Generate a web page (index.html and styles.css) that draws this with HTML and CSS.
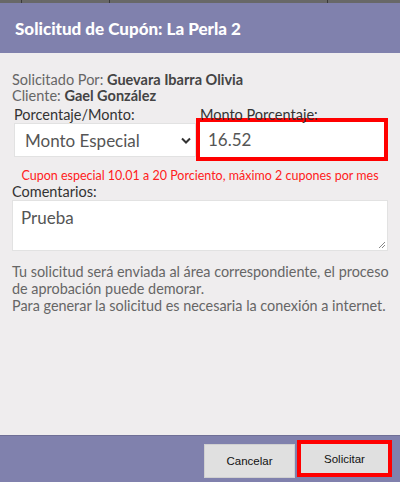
FILE: index.html
```html
<!DOCTYPE html>
<html lang="es">
<head>
  <meta charset="utf-8">
  <title>Solicitud de Cupón</title>
  <link rel="stylesheet" href="styles.css">
</head>
<body>
  <div class="backdrop">
    <span class="col col-1"></span>
    <span class="col col-2"></span>
    <span class="col col-3"></span>
  </div>
  <div class="modal">
    <div class="modal-header">Solicitud de Cupón: La Perla 2</div>

    <div class="modal-body">
      <div class="info">
        <div>Solicitado Por: <b>Guevara Ibarra Olivia</b></div>
        <div>Cliente: <b>Gael González</b></div>
      </div>

      <div class="fields">
        <div class="field field-left">
          <label>Porcentaje/Monto:</label>
          <div class="select">
            <span>Monto Especial</span>
            <svg class="chevron" width="10" height="7" viewBox="0 0 10 7">
              <path d="M1 1.5 L5 5.5 L9 1.5" fill="none" stroke="#333" stroke-width="2"/>
            </svg>
          </div>
        </div>
        <div class="field field-right">
          <label>Monto Porcentaje:</label>
          <div class="input highlight">16.52</div>
        </div>
      </div>

      <div class="warning">Cupon especial 10.01 a 20 Porciento, máximo 2 cupones por mes</div>

      <label class="comments-label">Comentarios:</label>
      <div class="textarea">
        Prueba
        <svg class="grip" width="8" height="8" viewBox="0 0 8 8">
          <path d="M7 1 L1 7 M7 4 L4 7" stroke="#888" stroke-width="1"/>
        </svg>
      </div>

      <p class="note">
        Tu solicitud será enviada al área correspondiente, el proceso de aprobación puede demorar.<br>
        Para generar la solicitud es necesaria la conexión a internet.
      </p>
    </div>

    <div class="modal-footer">
      <button class="btn">Cancelar</button>
      <button class="btn btn-main">Solicitar</button>
    </div>
  </div>
</body>
</html>
```

FILE: styles.css
```css
body {
  margin: 0;
  width: 400px;
  height: 482px;
  font-family: Lato, "Open Sans", sans-serif;
  display: flex;
  flex-direction: column;
  overflow: hidden;
}
.backdrop {
  height: 3px;
  background-color: #686868;
  display: flex;
}
.backdrop .col {
  width: 1px;
  background-color: #3a3a3a;
}
.col-1 { margin-left: 21px; }
.col-2 { margin-left: 87px; }
.col-3 { margin-left: 217px; }
.modal {
  flex: 1;
  display: flex;
  flex-direction: column;
  background-color: #efedee;
}
.modal-header {
  height: 50px;
  box-sizing: border-box;
  padding: 15px 15px 0;
  background-color: #8081ad;
  color: white;
  font-size: 17px;
  font-weight: 900;
}
.modal-body {
  flex: 1;
  padding: 19px 12px 0;
}
.info {
  font-size: 14.5px;
  line-height: 16px;
  color: #666;
}
.info b {
  color: #444;
}
.fields {
  display: flex;
  margin-top: 2px;
}
.field label {
  display: block;
  font-size: 14.5px;
  line-height: 17px;
  color: #333;
}
.field-left {
  width: 182px;
  padding-left: 2px;
}
.field-right {
  width: 192px;
}
.field-right label {
  padding-left: 4px;
  margin-bottom: -5px;
}
.select {
  height: 34px;
  box-sizing: border-box;
  background: white;
  border: 1px solid #e2e2e2;
  display: flex;
  align-items: center;
  justify-content: space-between;
  padding: 0 4px 0 10px;
  font-size: 17px;
  color: #555;
}
.input {
  height: 43px;
  box-sizing: border-box;
  background: white;
  padding: 0 0 0 8px;
  display: flex;
  align-items: center;
  font-size: 17px;
  color: #555;
}
.highlight {
  border: 4px solid #ff0000;
}
.warning {
  margin-top: 6px;
  text-align: center;
  font-size: 12.5px;
  line-height: 17px;
  color: #ff2020;
}
.comments-label {
  display: block;
  font-size: 14.5px;
  line-height: 16px;
  color: #333;
}
.textarea {
  position: relative;
  height: 51px;
  box-sizing: border-box;
  background: white;
  border: 1px solid #e2e2e2;
  padding: 6px 8px;
  font-size: 17px;
  color: #555;
}
.grip {
  position: absolute;
  right: 1px;
  bottom: 1px;
}
.note {
  margin: 12px -8px 0 0;
  font-size: 14.4px;
  line-height: 17px;
  color: #666;
}
.modal-footer {
  height: 47px;
  box-sizing: border-box;
  border-top: 1px solid #6f6f96;
  background-color: #8081ad;
  display: flex;
  justify-content: flex-end;
  align-items: flex-start;
  padding: 4px 8px 0 0;
  gap: 2px;
}
.btn {
  font-family: "Liberation Sans", Arial, sans-serif;
  font-size: 11.5px;
  color: #111;
  background-color: #e0e0e0;
  border: 1px solid #d0d0d0;
  width: 91px;
  height: 34px;
  margin-top: 4px;
}
.btn-main {
  width: 95px;
  height: 37px;
  margin-top: 0;
  border: 4px solid #ff0000;
}
```
